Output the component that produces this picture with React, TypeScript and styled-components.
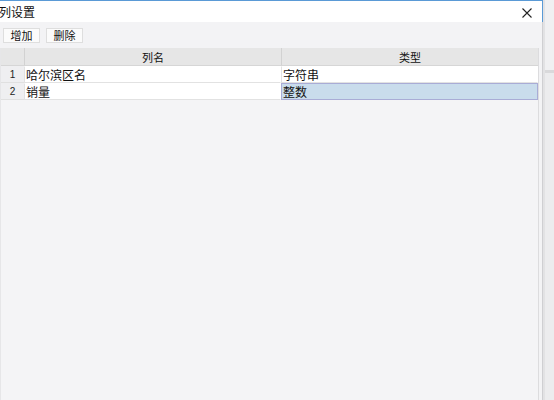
import React from "react";
import styled, { createGlobalStyle } from "styled-components";

const Global = createGlobalStyle`
  html, body { margin: 0; padding: 0; width: 554px; height: 400px; overflow: hidden; background: #ececee; }
  * { box-sizing: border-box; }
  #root { width: 554px; height: 400px; }
`;

const Page = styled.div`
  display: flex;
  width: 554px;
  height: 400px;
  font-family: "Noto Sans CJK SC", "Liberation Sans", sans-serif;
  font-size: 12px;
  color: #111;
`;

const Window = styled.div`
  width: 543px;
  height: 400px;
  display: flex;
  flex-direction: column;
  border-top: 1px solid #5a9ad6;
`;

const TitleBar = styled.div`
  height: 21px;
  background: #fff;
  border-right: 1px solid #5a9ad6;
  display: flex;
  align-items: center;
  justify-content: space-between;
  padding: 0 10px 0 0;
`;

const Title = styled.span`
  font-size: 12px;
  line-height: 12px;
  margin-left: -1px;
`;

const Close = styled.svg`
  width: 10px;
  height: 10px;
  margin-top: 2px;
`;

const Body = styled.div`
  flex: 1;
  background: #f3f3f5;
  border-right: 1px solid #cfcfd2;
  display: flex;
  flex-direction: column;
`;

const Toolbar = styled.div`
  display: flex;
  gap: 6px;
  padding: 6px 3px 5px 3px;
`;

const Button = styled.div`
  width: 37px;
  height: 15px;
  background: #fbfbfb;
  border: 1px solid #dedede;
  display: flex;
  align-items: center;
  justify-content: center;
  font-size: 11px;
  line-height: 11px;
`;

const Grid = styled.div`
  flex: 1;
  width: 539px;
  border-left: 1px solid #e6e6e8;
  border-right: 1px solid #dcdcde;
  display: flex;
  flex-direction: column;
  background: #f4f4f6;
`;

const Row = styled.div`
  display: grid;
  grid-template-columns: 23px 257px 1fr;
  height: ${(p: { $head?: boolean }) => (p.$head ? "18px" : "17px")};
`;

const HeadCell = styled.div<{ $num?: boolean }>`
  background: #e6e6e6;
  border-left: ${(p) => (p.$num ? "none" : "1px solid #d2d2d2")};
  border-bottom: 1px solid #d6d6d6;
  display: flex;
  align-items: center;
  justify-content: center;
  font-size: 11px;
`;

const NumCell = styled.div`
  background: #efeff1;
  border-bottom: 1px solid #e0e0e0;
  display: flex;
  align-items: center;
  justify-content: center;
  font-size: 10px;
  font-family: "Liberation Sans", sans-serif;
  color: #222;
`;

const Cell = styled.div<{ $sel?: boolean }>`
  background: ${(p) => (p.$sel ? "#c9dcec" : "#fff")};
  border: 1px solid ${(p) => (p.$sel ? "#a9acd6" : "transparent")};
  border-bottom: 1px solid ${(p) => (p.$sel ? "#a9acd6" : "#e2e2e2")};
  border-left: 1px solid ${(p) => (p.$sel ? "#a9acd6" : "#e2e2e2")};
  display: flex;
  align-items: center;
  padding-left: 1px;
  font-size: 12px;
  line-height: 12px;
  white-space: nowrap;
`;

const Backdrop = styled.div`
  flex: 1;
  display: flex;
  flex-direction: column;
  background: #ececee;
  border-left: 2px solid #e2e2e4;
`;

const BackTop = styled.div`
  height: 70px;
  background: #f0f0f2;
`;

const BackLine = styled.div`
  height: 3px;
  background: #d9d9db;
`;

const rows = [
  { n: 1, name: "哈尔滨区名", type: "字符串" },
  { n: 2, name: "销量", type: "整数", sel: true },
];

export default function App() {
  return (
    <>
      <Global />
      <Page>
        <Window>
          <TitleBar>
            <Title>列设置</Title>
            <Close viewBox="0 0 10 10">
              <path d="M0.5 0.5 L9.5 9.5 M9.5 0.5 L0.5 9.5" stroke="#222" strokeWidth="1.1" />
            </Close>
          </TitleBar>
          <Body>
            <Toolbar>
              <Button>增加</Button>
              <Button>删除</Button>
            </Toolbar>
            <Grid>
              <Row $head>
                <HeadCell $num />
                <HeadCell>列名</HeadCell>
                <HeadCell>类型</HeadCell>
              </Row>
              {rows.map((r) => (
                <Row key={r.n}>
                  <NumCell>{r.n}</NumCell>
                  <Cell>{r.name}</Cell>
                  <Cell $sel={r.sel}>{r.type}</Cell>
                </Row>
              ))}
            </Grid>
          </Body>
        </Window>
        <Backdrop>
          <BackTop />
          <BackLine />
        </Backdrop>
      </Page>
    </>
  );
}
